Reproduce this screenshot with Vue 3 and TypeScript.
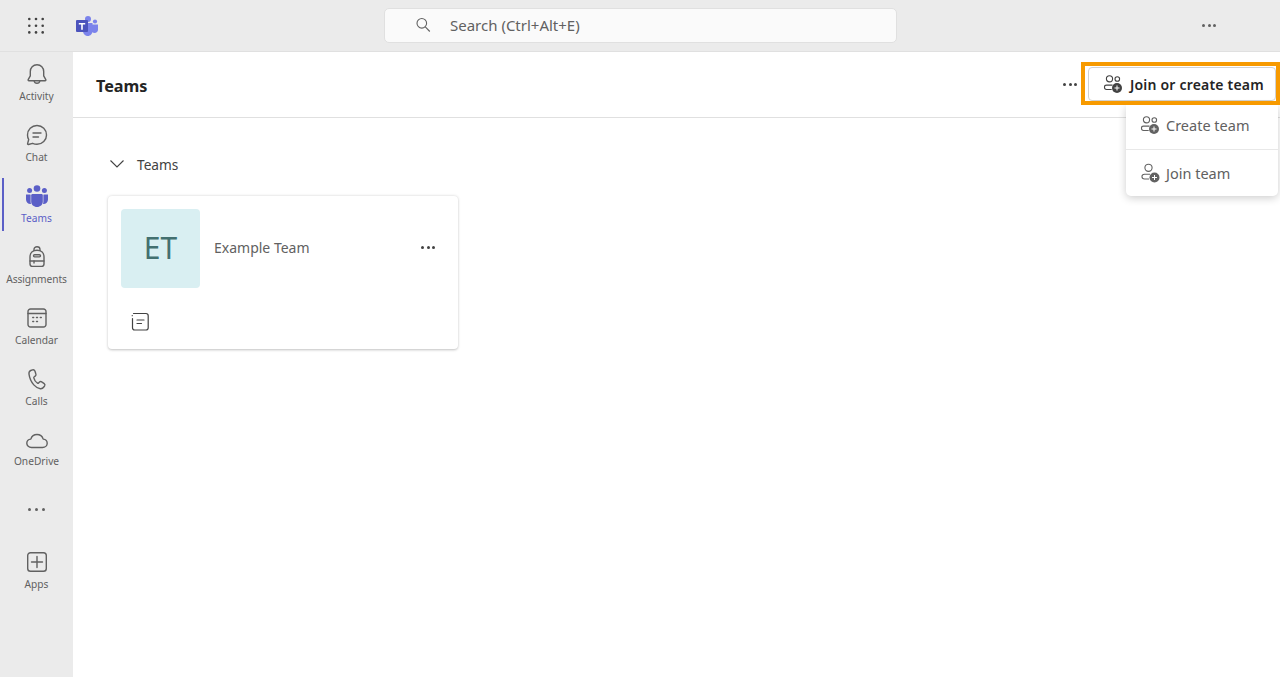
<script setup lang="ts">
interface NavItem {
  label: string
  paths: string[]
  active?: boolean
  cls?: string
}

const navItems: NavItem[] = [
  {
    label: 'Activity',
    paths: [
      'M12 2.800c-4 0-6.700 3-6.700 6.800v4.200L3.200 17.600c-.3.600.1 1.200.7 1.200h16.200c.6 0 1-.6.7-1.200l-2.100-3.800V9.600c0-3.800-2.700-6.800-6.700-6.800Z',
      'M9.200 19c.2 1.400 1.400 2.300 2.800 2.300s2.600-.9 2.800-2.300',
    ],
  },
  {
    label: 'Chat',
    paths: [
      'M12 2.500c5.400 0 9.500 4.100 9.500 9.400s-4.100 9.400-9.500 9.400c-1.600 0-3.100-.4-4.400-1l-4.200 1.200c-.5.100-1-.3-.8-.9l1.100-4.100a9.300 9.300 0 0 1-1.200-4.600c0-5.300 4.100-9.400 9.500-9.400Z',
      'M8 10h8',
      'M8 14h5.500',
    ],
  },
  { label: 'Teams', paths: [], active: true },
  {
    label: 'Assignments',
    cls: 'assign',
    paths: [
      'M5 12c0-4 2.700-6.800 7-6.800s7 2.800 7 6.800v7c0 1.400-1 2.400-2.400 2.400H7.400C6 21.400 5 20.400 5 19v-7Z',
      'M9 5.600V4.500c0-1.500 1.300-2.700 3-2.700s3 1.200 3 2.700v1.100',
      'M9.600 9.700h4.800c.7 0 1.100.5 1.100 1.100s-.4 1.100-1.100 1.100H9.600c-.7 0-1.100-.5-1.100-1.100s.4-1.100 1.100-1.100Z',
      'M5 16h14',
      'M9 16v2',
    ],
  },
  {
    label: 'Calendar',
    paths: [
      'M5.500 3h13A2.500 2.500 0 0 1 21 5.500v13a2.500 2.500 0 0 1-2.500 2.500h-13A2.500 2.500 0 0 1 3 18.500v-13A2.500 2.500 0 0 1 5.500 3Z',
      'M3 7.500h18',
      'M7.700 11.500h1M11.500 11.500h1M15.300 11.500h1M7.700 15.500h1M11.500 15.500h1',
    ],
  },
  {
    label: 'Calls',
    paths: [
      'M7.500 2.800 5.700 3.500C4.300 4.100 3.800 5.600 4 7.200c.6 4.300 2.300 7.900 4.800 10.700 2 2.200 4.400 3.600 6.500 3.800 1.500.2 2.700-.5 3.500-1.700l.8-1.200c.5-.8.300-1.700-.4-2.200l-2.500-1.700c-.7-.5-1.600-.4-2.200.2l-.9.900c-.3.300-.7.400-1.100.2-1.800-1.100-3.200-3.300-3.700-5.400-.1-.4 0-.8.400-1l1-.7c.7-.5 1-1.300.7-2.100L9.900 4c-.4-1-1.400-1.500-2.400-1.200Z',
    ],
  },
  {
    label: 'OneDrive',
    cls: 'drive',
    paths: [
      'M6.500 19.500c-2.600 0-4.700-1.800-4.700-4.200 0-2.200 1.800-4 4-4.200C6.700 8.300 9.100 6.500 12 6.500c2.900 0 5.300 1.800 6.200 4.600 2.200.2 4 2 4 4.200 0 2.400-2.100 4.200-4.700 4.200h-11Z',
    ],
  },
  { label: '', paths: [], cls: 'more' },
  {
    label: 'Apps',
    paths: [
      'M5.500 2.700h13a2.800 2.800 0 0 1 2.800 2.800v13a2.800 2.800 0 0 1-2.800 2.800h-13a2.800 2.800 0 0 1-2.800-2.800v-13a2.800 2.800 0 0 1 2.800-2.800Z',
      'M12 6.500v11M6.500 12h11',
    ],
  },
]
</script>

<template>
  <div class="app">
    <header class="topbar">
      <div class="top-left">
        <svg class="waffle" width="20" height="20" viewBox="0 0 20 20" aria-hidden="true">
          <g fill="#424242">
            <circle cx="3.300" cy="3" r="1.300" /><circle cx="10" cy="3" r="1.300" /><circle cx="16.700" cy="3" r="1.300" />
            <circle cx="3.300" cy="9.700" r="1.300" /><circle cx="10" cy="9.700" r="1.300" /><circle cx="16.700" cy="9.700" r="1.300" />
            <circle cx="3.300" cy="16.400" r="1.300" /><circle cx="10" cy="16.400" r="1.300" /><circle cx="16.700" cy="16.400" r="1.300" />
          </g>
        </svg>
        <svg class="logo" width="22" height="20" viewBox="0 0 22 20" aria-hidden="true">
          <circle cx="19" cy="5.500" r="2.100" fill="#7b83eb" />
          <path d="M15 8.500h7v5c0 2-1.500 3.500-3.400 3.500-1.900 0-3.600-1.500-3.600-3.500v-5Z" fill="#7b83eb" />
          <circle cx="12" cy="3" r="3" fill="#7b83eb" />
          <path d="M7 7h9.500v8c0 2.800-2.100 5-4.700 5S7 17.800 7 15V7Z" fill="#7b83eb" />
          <rect x="0" y="4" width="12" height="12" rx="1" fill="#4b53bc" />
          <path d="M2.800 6.900h6.400v1.500H6.800v5.400H5.200V8.400H2.800V6.900Z" fill="#fff" />
        </svg>
      </div>
      <div class="search">
        <svg width="16" height="16" viewBox="0 0 16 16" fill="none" stroke="#616161" stroke-width="1.100" aria-hidden="true">
          <circle cx="6.800" cy="6.300" r="4.800" />
          <path d="m10.300 9.800 4.500 4.700" />
        </svg>
        <span>Search (Ctrl+Alt+E)</span>
      </div>
      <div class="top-more"><i></i><i></i><i></i></div>
    </header>

    <div class="body">
      <nav class="rail">
        <a v-for="item in navItems" :key="item.label + item.cls" class="rail-item" :class="[{ active: item.active }, item.cls]">
          <div v-if="item.cls === 'more'" class="rail-dots"><i></i><i></i><i></i></div>
          <svg v-else-if="item.active" class="rail-icon" viewBox="0 0 24 24" fill="#5b5fc7" aria-hidden="true">
            <circle cx="12" cy="4.500" r="3.300" />
            <circle cx="4.600" cy="6.600" r="2.500" />
            <circle cx="19.400" cy="6.600" r="2.500" />
            <path d="M7.500 10h9c.8 0 1.300.6 1.300 1.300v6.200c0 3.200-2.600 5.500-5.800 5.500s-5.800-2.300-5.800-5.500v-6.200c0-.7.500-1.300 1.300-1.300Z" />
            <path d="M1 10.500h4.200c.3 0 .4.200.4.500v6.500c0 .9.100 1.700.4 2.400-2.700.3-5-1.700-5-4.500v-4.900Z" />
            <path d="M23 10.500h-4.200c-.3 0-.4.200-.4.500v6.500c0 .9-.1 1.700-.4 2.400 2.700.3 5-1.700 5-4.500v-4.900Z" />
          </svg>
          <svg v-else class="rail-icon" viewBox="0 0 24 24" fill="none" stroke="#616161" stroke-width="1.400" stroke-linecap="round" stroke-linejoin="round" aria-hidden="true">
            <path v-for="d in item.paths" :key="d" :d="d" />
          </svg>
          <span v-if="item.label" class="rail-label">{{ item.label }}</span>
        </a>
      </nav>

      <main class="main">
        <div class="head">
          <h1>Teams</h1>
          <div class="head-actions">
            <div class="head-more"><i></i><i></i><i></i></div>
            <button class="join" type="button">
              <svg width="20" height="20" viewBox="0 0 20 20" aria-hidden="true">
                <g fill="none" stroke="#424242" stroke-width="1.100">
                  <circle cx="6.500" cy="4.800" r="3.100" />
                  <circle cx="14.300" cy="5" r="2.300" />
                  <path d="M8.700 15.500H3.500C2.300 15.500 1.500 14.700 1.500 13.600v-.6c0-1 .8-1.900 2-1.900h6" />
                </g>
                <circle cx="14" cy="14" r="5" fill="#424242" />
                <path d="M14 11.500v5M11.500 14h5" stroke="#fff" stroke-width="1" />
              </svg>
              <span>Join or create team</span>
            </button>
          </div>
        </div>

        <section class="content">
          <div class="section-title">
            <svg width="16" height="16" viewBox="0 0 16 16" fill="none" stroke="#424242" stroke-width="1.100" aria-hidden="true">
              <path d="m1.500 4.500 6.500 6.500 6.500-6.500" />
            </svg>
            <span>Teams</span>
          </div>
          <article class="card">
            <div class="card-top">
              <div class="avatar">ET</div>
              <span class="team-name">Example Team</span>
              <div class="card-more"><i></i><i></i><i></i></div>
            </div>
            <svg class="post-icon" width="20" height="20" viewBox="0 0 20 20" fill="none" stroke="#424242" stroke-width="1.200" stroke-linecap="round" aria-hidden="true">
              <path d="M3.500 1.500h12.500c1.200 0 2.200 1 2.200 2.200v12.100c0 1.200-1 2.200-2.200 2.200H4.700c-1.200 0-2.200-1-2.200-2.200V6.500" />
              <path d="M2.200 3.700h.1" />
              <path d="M7 8h7M7 11.500h4.500" />
            </svg>
          </article>
        </section>
      </main>
    </div>

    <div class="menu">
      <div class="menu-item create">
        <svg width="20" height="20" viewBox="0 0 20 20" aria-hidden="true">
          <g fill="none" stroke="#616161" stroke-width="1.100">
            <circle cx="6.500" cy="4.800" r="3.100" />
            <circle cx="14.300" cy="5" r="2.300" />
            <path d="M8.700 15.500H3.500C2.300 15.500 1.500 14.700 1.500 13.600v-.6c0-1 .8-1.900 2-1.900h6" />
          </g>
          <circle cx="14" cy="14" r="5" fill="#616161" />
          <path d="M14 11.500v5M11.500 14h5" stroke="#fff" stroke-width="1" />
        </svg>
        <span>Create team</span>
      </div>
      <div class="menu-item join-item">
        <svg width="20" height="20" viewBox="0 0 20 20" aria-hidden="true">
          <g fill="none" stroke="#616161" stroke-width="1.100">
            <circle cx="8.500" cy="4.800" r="3.600" />
            <path d="M9 16H4.500C3 16 2 15 2 13.800v-.5c0-1.200 1-2.100 2.500-2.100H10" />
          </g>
          <circle cx="14.500" cy="14.500" r="5" fill="#616161" />
          <path d="M14.500 12v5M12 14.500h5" stroke="#fff" stroke-width="1" />
        </svg>
        <span>Join team</span>
      </div>
    </div>

    <div class="highlight"></div>
  </div>
</template>

<style scoped>
.app {
  position: relative;
  width: 1280px;
  height: 677px;
  display: flex;
  flex-direction: column;
  overflow: hidden;
  background: #ebebeb;
  font-family: "Noto Sans", "Open Sans", sans-serif;
  color: #242424;
}

.topbar {
  height: 52px;
  flex: none;
  box-sizing: border-box;
  display: grid;
  grid-template-columns: 384px 513px 1fr;
  align-items: center;
  background: #ebebeb;
  border-bottom: 1px solid #e0e0e0;
}
.top-left {
  display: flex;
  align-items: center;
  padding-left: 26px;
  gap: 30px;
}
.search {
  height: 35px;
  box-sizing: border-box;
  display: flex;
  align-items: center;
  gap: 19px;
  padding-left: 30px;
  padding-bottom: 1px;
  background: #fafafa;
  border: 1px solid #e0e0e0;
  border-radius: 5px;
  font-size: 15px;
  color: #616161;
}
.top-more {
  display: flex;
  gap: 2.500px;
  justify-content: flex-end;
  padding-right: 64px;
}
.top-more i,
.head-more i,
.card-more i,
.rail-dots i {
  display: block;
  width: 3px;
  height: 3px;
  border-radius: 50%;
  background: #616161;
}

.body {
  flex: 1;
  display: flex;
  min-height: 0;
}
.rail {
  width: 73px;
  flex: none;
  box-sizing: border-box;
  padding-top: 4px;
  display: flex;
  flex-direction: column;
  gap: 8px;
}
.rail-item {
  position: relative;
  height: 53px;
  display: flex;
  flex-direction: column;
  align-items: center;
  padding-top: 6px;
  box-sizing: border-box;
  color: #616161;
}
.rail-item.active {
  color: #5b5fc7;
}
.rail-item.active::before {
  content: "";
  position: absolute;
  left: 2px;
  top: 0;
  bottom: 0;
  width: 2px;
  background: #5b5fc7;
}
.rail-icon {
  display: block;
  width: 24px;
  height: 24px;
  flex: none;
}
.rail-label {
  margin-top: 3px;
  font-size: 10.200px;
  line-height: 14px;
  white-space: nowrap;
}
.rail-item.drive .rail-label {
  margin-top: 2px;
}
.rail-item.assign .rail-label {
  letter-spacing: -0.100px;
}
.rail-dots {
  display: flex;
  gap: 4px;
  padding-top: 19px;
}

.main {
  flex: 1;
  min-width: 0;
  background: #fff;
  display: flex;
  flex-direction: column;
}
.head {
  height: 66px;
  flex: none;
  box-sizing: border-box;
  display: flex;
  align-items: center;
  justify-content: space-between;
  padding: 0 4px 1px 23px;
  border-bottom: 1px solid #e0e0e0;
}
.head h1 {
  margin: 3px 0 0;
  font-size: 16.200px;
  font-weight: 700;
  color: #242424;
}
.head-actions {
  display: flex;
  align-items: center;
  gap: 11px;
}
.head-more {
  display: flex;
  gap: 2.500px;
}
.head-more i {
  background: #424242;
}
.join {
  width: 188px;
  height: 34px;
  box-sizing: border-box;
  display: flex;
  align-items: center;
  gap: 7px;
  padding: 0 0 0 14px;
  background: #fff;
  border: 1px solid #d1d1d1;
  border-radius: 4px;
  font: 600 14px "Noto Sans", sans-serif;
  letter-spacing: 0.200px;
  color: #242424;
  white-space: nowrap;
}
.join span {
  margin-top: 1px;
}

.content {
  padding: 34px 0 0 36px;
}
.section-title {
  display: flex;
  align-items: center;
  gap: 12px;
  height: 24px;
  font-size: 13.700px;
  color: #424242;
}
.card {
  width: 350px;
  height: 153px;
  margin: 20px 0 0 -1px;
  box-sizing: border-box;
  padding: 13px 13px 0 13px;
  background: #fff;
  border-radius: 4px;
  box-shadow: 0 0.500px 3px rgba(0, 0, 0, 0.18), 0 1px 2px rgba(0, 0, 0, 0.08);
}
.card-top {
  display: flex;
  align-items: center;
}
.avatar {
  width: 79px;
  height: 79px;
  flex: none;
  box-sizing: border-box;
  padding-bottom: 2px;
  display: flex;
  align-items: center;
  justify-content: center;
  background: #d9eff2;
  border-radius: 4px;
  font-size: 30px;
  color: #437070;
}
.team-name {
  flex: 1;
  margin-left: 14px;
  margin-bottom: 2px;
  font-size: 14px;
  color: #616161;
}
.card-more {
  display: flex;
  gap: 2.500px;
  margin-right: 10px;
  margin-top: -2px;
}
.card-more i {
  background: #424242;
}
.post-icon {
  display: block;
  margin: 24px 0 0 9px;
}

.menu {
  position: absolute;
  left: 1126px;
  top: 105px;
  width: 152px;
  height: 91px;
  background: #fff;
  border-radius: 0 0 5px 5px;
  box-shadow: 0 2px 8px rgba(0, 0, 0, 0.2);
  display: flex;
  flex-direction: column;
}
.menu-item {
  box-sizing: border-box;
  display: flex;
  align-items: center;
  gap: 6px;
  padding-left: 14px;
  font-size: 14.500px;
  color: #616161;
}
.menu-item.create {
  height: 44px;
  padding-bottom: 5px;
}
.menu-item.join-item {
  height: 47px;
  padding-bottom: 1px;
  border-top: 1px solid #e8e8e8;
}
.highlight {
  position: absolute;
  left: 1081px;
  top: 62px;
  width: 199px;
  height: 43px;
  box-sizing: border-box;
  border: 4px solid #f79a00;
  pointer-events: none;
}
</style>
